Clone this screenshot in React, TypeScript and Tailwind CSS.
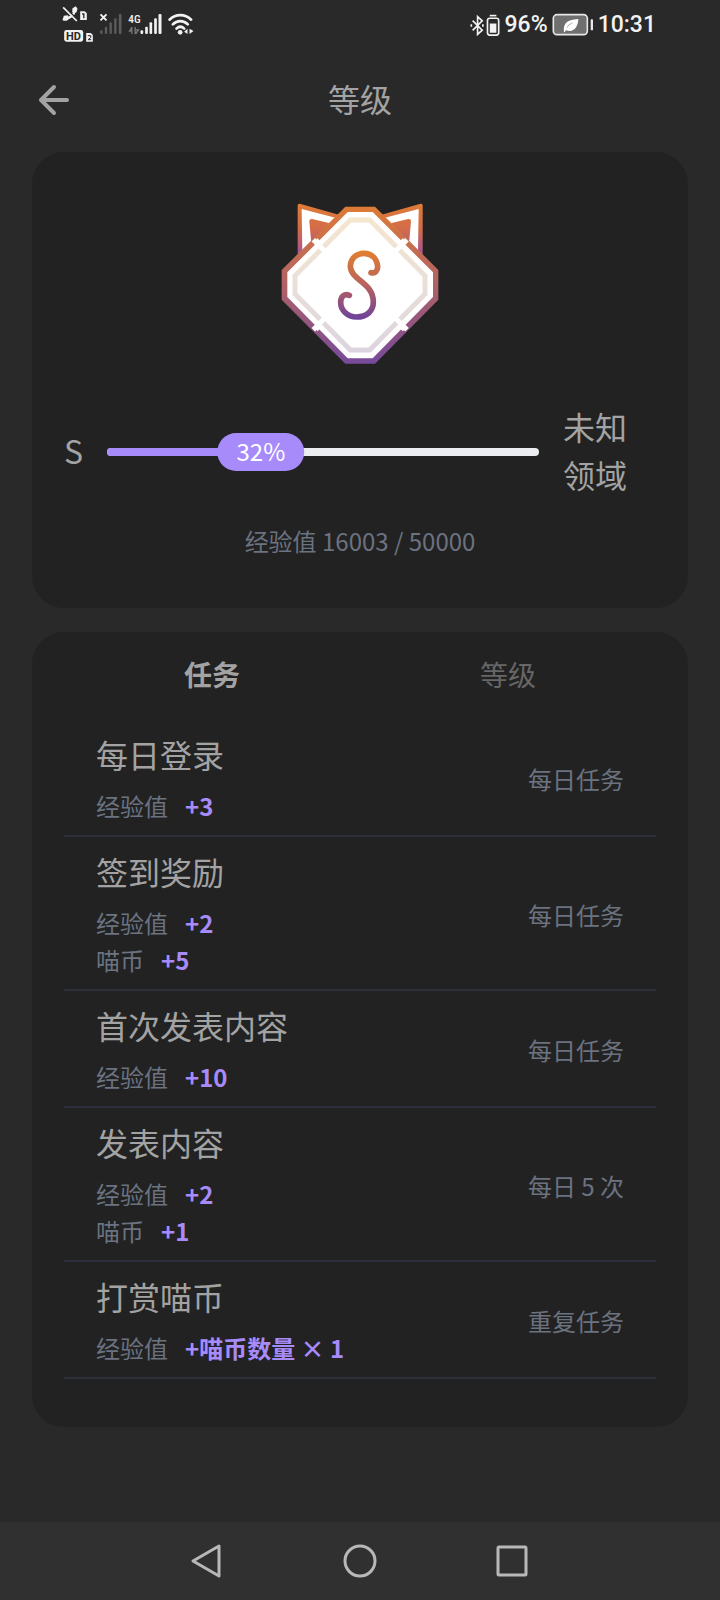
import { useState } from "react";

interface Reward {
    label: string;
    value: string;
}

interface Task {
    title: string;
    rewards: Reward[];
    period: string;
}

const TASKS: Task[] = [
    { title: "每日登录", rewards: [{ label: "经验值", value: "+3" }], period: "每日任务" },
    { title: "签到奖励", rewards: [{ label: "经验值", value: "+2" }, { label: "喵币", value: "+5" }], period: "每日任务" },
    { title: "首次发表内容", rewards: [{ label: "经验值", value: "+10" }], period: "每日任务" },
    { title: "发表内容", rewards: [{ label: "经验值", value: "+2" }, { label: "喵币", value: "+1" }], period: "每日 5 次" },
    { title: "打赏喵币", rewards: [{ label: "经验值", value: "+喵币数量 × 1" }], period: "重复任务" },
];

const TABS = ["任务", "等级"];

function SignalIcons() {
    return (
        <svg viewBox="60 0 410 150" className="h-[50px] w-[137px]" fill="#f2f2f2" aria-hidden="true">
            {/* muted call, sim 1 */}
            <path d="M76 56C92 54 102 44 105 28" fill="none" stroke="#f2f2f2" strokeWidth="7" />
            <path d="M67 60l4-13 12-1 4 10-7 6h-9zM96 35l1-10 10-6 5 7-3 11-9 3z" />
            <path d="M74 20l41 42" stroke="#292929" strokeWidth="4" />
            <path d="M69 22l41 41" stroke="#f2f2f2" strokeWidth="5" />
            <path d="M120 34h14l6 6v20h-20z" />
            <path d="M126 42h5v13" fill="none" stroke="#292929" strokeWidth="4" />
            {/* HD, sim 2 */}
            <rect x="72" y="90" width="57" height="35" rx="7" />
            <text x="100" y="119" textAnchor="middle" fontSize="33" fontWeight="700" fill="#292929" fontFamily="Roboto, sans-serif">HD</text>
            <path d="M138 99h14l6 6v20h-20z" />
            <path d="M143 107h9v5l-8 7h9" fill="none" stroke="#292929" strokeWidth="3" />
            {/* sim 1 signal */}
            <path d="M181 43l18 18M199 43l-18 18" stroke="#f2f2f2" strokeWidth="6" />
            <g fill="#5c5c5c">
                <rect x="180" y="91" width="7" height="11" rx="3" />
                <rect x="194" y="80" width="7" height="22" rx="3" />
                <rect x="208" y="67" width="7" height="35" rx="3" />
                <rect x="222" y="55" width="7" height="47" rx="3" />
                <rect x="236" y="42" width="8" height="60" rx="3" />
            </g>
            {/* sim 2 signal */}
            <text x="283" y="68" textAnchor="middle" fontSize="34" fontWeight="500" fontFamily="Roboto Condensed, Roboto, sans-serif">4G</text>
            <path d="M275 81v21M275 82l-7 11h7M285 81v21M286 102l9-12h-9" fill="none" stroke="#777" strokeWidth="4" />
            <rect x="301" y="91" width="8" height="11" rx="3" />
            <rect x="315" y="80" width="8" height="22" rx="3" />
            <rect x="328" y="67" width="8" height="35" rx="3" />
            <rect x="342" y="55" width="8" height="47" rx="3" />
            <rect x="355" y="42" width="9" height="60" rx="3" />
            {/* wifi */}
            <g fill="none" stroke="#f2f2f2" strokeWidth="8" strokeLinecap="round">
                <path d="M388 59c19-18 46-18 65 0" />
                <path d="M398 73c13-13 32-13 45 0" />
                <path d="M409 86c7-7 16-7 23 0" />
            </g>
            <circle cx="420" cy="97" r="7" />
            <path d="M442 86v16l-10-7zM448 86v16l12-9z" />
        </svg>
    );
}

function BluetoothIcon() {
    return (
        <svg viewBox="58 35 94 74" className="h-[25px] w-[31px]" fill="none" stroke="#f2f2f2" strokeWidth="5" aria-hidden="true">
            <path d="M66 57l29 29-14 13V45l14 13-29 29" />
            <path d="M62 68v8M97 68v8" />
            <rect x="111" y="50" width="34" height="51" rx="7" />
            <path d="M118 42h20" />
            <rect x="118" y="66" width="20" height="28" fill="#f2f2f2" stroke="none" />
        </svg>
    );
}

function BatteryIcon() {
    return (
        <svg viewBox="306 38 126 72" className="h-6 w-[42px]" aria-hidden="true">
            <rect x="310" y="43" width="102" height="60" rx="11" fill="#6f6f6f" stroke="#e6e6e6" strokeWidth="5" />
            <rect x="422" y="57" width="7" height="33" rx="2" fill="#e6e6e6" />
            <path d="M342 96c-3-25 6-38 43-40-1 25-14 42-37 34l-4 6zM349 86c5-10 13-16 23-20-12 3-20 9-23 20z" fill="#fff" />
        </svg>
    );
}

function StatusBar() {
    return (
        <div className="flex h-12 items-center justify-between pt-0.5 pr-16 pl-[60px] font-['Roboto',sans-serif] text-[23px] font-medium text-[#f2f2f2]">
            <SignalIcons />
            <div className="flex items-center gap-1">
                <BluetoothIcon />
                <span>96%</span>
                <BatteryIcon />
                <span>10:31</span>
            </div>
        </div>
    );
}

function LevelBadge() {
    return (
        <svg viewBox="33 40 474 483" className="h-[161px] w-[158px]" role="img" aria-label="S">
            <defs>
                <linearGradient id="frame" gradientUnits="userSpaceOnUse" x1="0" y1="50" x2="0" y2="523">
                    <stop offset="0" stopColor="#df7b35" />
                    <stop offset="0.5" stopColor="#af6166" />
                    <stop offset="1" stopColor="#764a9b" />
                </linearGradient>
                <linearGradient id="ear" gradientUnits="userSpaceOnUse" x1="0" y1="40" x2="0" y2="200">
                    <stop offset="0" stopColor="#e07d35" />
                    <stop offset="0.5" stopColor="#d36a4a" />
                    <stop offset="1" stopColor="#a0539a" />
                </linearGradient>
                <linearGradient id="inner" gradientUnits="userSpaceOnUse" x1="0" y1="83" x2="0" y2="490">
                    <stop offset="0" stopColor="#f5e6cf" />
                    <stop offset="0.5" stopColor="#e8dfd8" />
                    <stop offset="1" stopColor="#dcd4df" />
                </linearGradient>
                <linearGradient id="letter" gradientUnits="userSpaceOnUse" x1="0" y1="183" x2="0" y2="390">
                    <stop offset="0" stopColor="#e2802f" />
                    <stop offset="0.5" stopColor="#b7625e" />
                    <stop offset="1" stopColor="#6d429b" />
                </linearGradient>
                <g id="cat-ear">
                    <path d="M88 47L205 80L88 196Z" fill="url(#ear)" stroke="url(#ear)" strokeWidth="10" strokeLinejoin="round" />
                    <path d="M95 58L202 86L97 186Z" fill="#fff" />
                    <path d="M118 95q0-9 9-7L176 100L180 110L124 162Z" fill="url(#ear)" />
                </g>
            </defs>
            <use href="#cat-ear" />
            <use href="#cat-ear" transform="translate(541 0) scale(-1 1)" />
            <path d="M226 51H315L505 241V330L315 522H226L35 330V241Z" fill="url(#frame)" />
            <path d="M233 67H308L489 248V322L308 506H233L52 322V248Z" fill="#fff" />
            <path d="M241 91H299L465 258V313L299 481H241L75 313V258Z" fill="none" stroke="url(#inner)" strokeWidth="15" />
            <path d="M130 150L168 188M411 150L373 188M130 420L168 382M411 420L373 382" stroke="#fff" strokeWidth="15" />
            <path d="M134 162L147 150M407 162L394 150M134 408L147 420M407 408L394 420" stroke="#fff" strokeWidth="12" />
            <path
                d="M303 249C317 253 323 241 323 231C321 205 303 191 282 191C258 191 241 208 241 230C243 272 310 278 310 337C310 365 289 382 260 382C231 382 212 361 212 338C212 319 224 311 238 317"
                fill="none"
                stroke="url(#letter)"
                strokeWidth="17"
                strokeLinecap="round"
            />
        </svg>
    );
}

function ExpProgress({ percent }: { percent: number }) {
    return (
        <div
            role="progressbar"
            aria-label="经验值"
            aria-valuenow={percent}
            aria-valuemin={0}
            aria-valuemax={100}
            className="relative h-2 flex-1 rounded-full bg-[#ebedf0]"
        >
            <div className="h-full rounded-full bg-[#a78bfa]" style={{ width: `${percent}%` }} />
            <span
                className="absolute top-1/2 rounded-full bg-[#a78bfa] px-[19px] pb-0.5 text-2xl leading-9 text-white"
                style={{ left: `${percent}%`, transform: `translate(-${percent}%, -50%)` }}
            >
                {percent}%
            </span>
        </div>
    );
}

function TaskRow({ task }: { task: Task }) {
    return (
        <li className="flex items-center justify-between border-b-2 border-[#2d303a] px-8 pt-[10px] pb-[11px]">
            <div>
                <h2 className="text-[32px] leading-[48px]">{task.title}</h2>
                <div className="mt-[9px] text-2xl leading-[37px]">
                    {task.rewards.map((reward) => (
                        <p key={reward.label}>
                            <span className="text-[#6b7280]">{reward.label}</span>
                            <span className="ml-[17px] font-bold text-[#a78bfa]">{reward.value}</span>
                        </p>
                    ))}
                </div>
            </div>
            <span className="pt-1 text-2xl text-[#6b7280]">{task.period}</span>
        </li>
    );
}

export default function App() {
    const [activeTab, setActiveTab] = useState(TABS[0]);

    return (
        <div className="flex min-h-screen flex-col bg-[#292929] font-['Noto_Sans_CJK_SC',sans-serif] text-[#a3a3a3]">
            <StatusBar />
            <header className="grid h-[100px] grid-cols-[1fr_auto_1fr] items-center px-8">
                <button type="button" aria-label="返回" className="w-11">
                    <svg viewBox="0 0 44 44" className="size-11" fill="none" stroke="currentColor" strokeWidth="4" strokeLinecap="round" strokeLinejoin="round">
                        <path d="M22 11L9 24L22 37M9 24H35" />
                    </svg>
                </button>
                <h1 className="text-[32px] leading-[48px]">等级</h1>
            </header>

            <main className="mx-8 mt-1 flex flex-1 flex-col gap-6">
                <section className="flex flex-col items-center rounded-[32px] bg-[#222222] px-8 pt-[51px] pb-12">
                    <LevelBadge />
                    <div className="mt-[38px] flex w-full items-center gap-6 text-[32px] leading-[48px]">
                        <span className="pb-1">S</span>
                        <ExpProgress percent={32} />
                        <span className="w-[93px] pb-1">未知领域</span>
                    </div>
                    <p className="mt-[21px] pb-px text-2xl leading-9 text-[#6b7280]">经验值 16003 / 50000</p>
                </section>

                <section className="rounded-[32px] bg-[#222222] px-8 pb-12">
                    <div role="tablist" className="grid h-[88px] grid-cols-2">
                        {TABS.map((tab) => (
                            <button
                                key={tab}
                                type="button"
                                role="tab"
                                aria-selected={tab === activeTab}
                                className={`pb-1 text-[28px] ${tab === activeTab ? "font-bold" : "text-[#666666]"}`}
                                onClick={() => setActiveTab(tab)}
                            >
                                {tab}
                            </button>
                        ))}
                    </div>
                    <ul>
                        {TASKS.map((task) => (
                            <TaskRow key={task.title} task={task} />
                        ))}
                    </ul>
                </section>
            </main>

            <nav className="flex h-[78px] items-center justify-center gap-[116px] bg-[#303030] text-[#b8b8b8]">
                <button type="button" aria-label="后退">
                    <svg viewBox="0 0 36 36" className="size-9" fill="none" stroke="currentColor" strokeWidth="3" strokeLinejoin="round">
                        <path d="M29 3V33L3 18Z" />
                    </svg>
                </button>
                <button type="button" aria-label="主页">
                    <svg viewBox="0 0 36 36" className="size-9" fill="none" stroke="currentColor" strokeWidth="3">
                        <circle cx="18" cy="18" r="15" />
                    </svg>
                </button>
                <button type="button" aria-label="最近任务">
                    <svg viewBox="0 0 36 36" className="size-9" fill="none" stroke="currentColor" strokeWidth="3">
                        <rect x="4" y="4" width="28" height="28" rx="1" />
                    </svg>
                </button>
            </nav>
        </div>
    );
}
